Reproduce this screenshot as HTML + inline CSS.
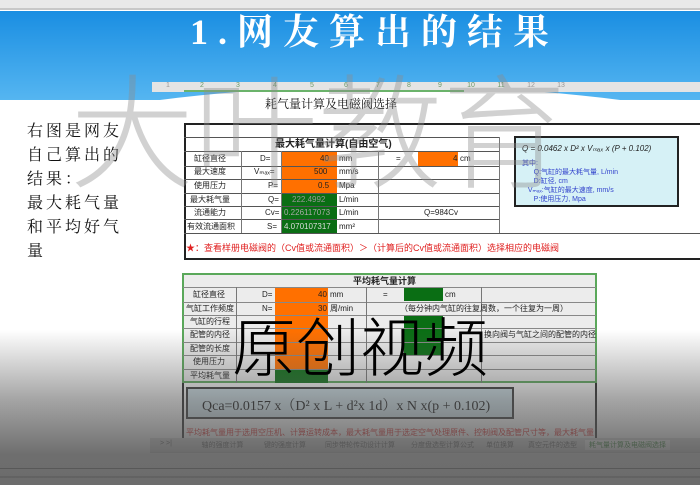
<!DOCTYPE html>
<html><head><meta charset="utf-8"><style>
*{margin:0;padding:0;box-sizing:border-box}
body{width:700px;height:485px;overflow:hidden;position:relative;background:#fff;font-family:"Liberation Sans","Noto Sans CJK SC",sans-serif}
.a{position:absolute}
.c{position:absolute;font-size:8px;color:#222;white-space:nowrap;line-height:1}
.or{background:#ff7000}
.gr{background:#0a6e14}
.hl{position:absolute;height:1px;background:#555}
.vl{position:absolute;width:1px;background:#777}
.serif{font-family:"Liberation Serif","Noto Serif CJK SC",serif}
</style></head><body>
<div class="a" style="left:0;top:0;width:700px;height:10px;background:#e9e9e9;border-bottom:2px solid #c8c8c8"></div>
<div class="a" style="left:0;top:11px;width:700px;height:90px;background:linear-gradient(#1a8ee2,#56b6f1)"></div>
<div class="a" style="left:-60px;top:86px;width:900px;height:200px;border-radius:50%;background:#fff"></div>
<div class="a" style="left:0;top:100px;width:700px;height:400px;background:#fff"></div>
<div class="a serif" style="left:190px;top:4px;font-size:36px;color:#fff;font-weight:bold;letter-spacing:10px;white-space:nowrap">1.网友算出的结果</div>
<div class="a" style="left:152px;top:82px;width:548px;height:10px;background:#e4e4e4"></div>
<div class="a" style="left:184px;top:90px;width:280px;height:2px;background:#6bb36b"></div>
<div class="a" style="left:152px;top:82px;width:548px;font-size:7px;color:#6a9a6a;display:flex">
<span style="width:32px;text-align:center;color:#999">1</span><span style="width:36px;text-align:center">2</span><span style="width:36px;text-align:center">3</span><span style="width:38px;text-align:center">4</span><span style="width:36px;text-align:center">5</span><span style="width:32px;text-align:center">6</span><span style="width:32px;text-align:center">7</span><span style="width:30px;text-align:center">8</span><span style="width:32px;text-align:center">9</span><span style="width:30px;text-align:center">10</span><span style="width:30px;text-align:center">11</span><span style="width:30px;text-align:center;color:#999">12</span><span style="width:30px;text-align:center;color:#999">13</span></div>
<div class="a serif" style="left:265px;top:95px;font-size:12px;color:#111">耗气量计算及电磁阀选择</div>
<div class="a serif" style="left:27px;top:120px;width:110px;font-size:16px;line-height:24px;color:#111;letter-spacing:3px">右图是网友自己算出的结果：<br>最大耗气量和平均好气量</div>
<div class="a" style="left:184px;top:123px;width:520px;height:137px;border:2px solid #222;border-right:none"></div>
<div class="a or" style="left:281px;top:152px;width:56px;height:41px"></div>
<div class="a gr" style="left:281px;top:193px;width:56px;height:40px"></div>
<div class="a or" style="left:418px;top:152px;width:40px;height:14px"></div>
<div class="hl" style="left:184px;top:137px;width:315px"></div>
<div class="hl" style="left:184px;top:151px;width:315px"></div>
<div class="hl" style="left:184px;top:166px;width:315px"></div>
<div class="hl" style="left:184px;top:179px;width:315px"></div>
<div class="hl" style="left:184px;top:193px;width:315px"></div>
<div class="hl" style="left:184px;top:206px;width:315px"></div>
<div class="hl" style="left:184px;top:219px;width:315px"></div>
<div class="hl" style="left:184px;top:233px;width:516px"></div>
<div class="vl" style="left:241px;top:151px;height:82px"></div>
<div class="vl" style="left:281px;top:151px;height:82px"></div>
<div class="vl" style="left:378px;top:151px;height:82px"></div>
<div class="vl" style="left:499px;top:137px;height:96px"></div>
<div class="c" style="left:275px;top:140px;font-size:10px;font-weight:bold">最大耗气量计算(自由空气)</div>
<div class="c" style="left:194px;top:155px">缸径直径</div><div class="c" style="left:260px;top:155px">D=</div><div class="c" style="left:320px;top:155px">40</div><div class="c" style="left:339px;top:155px">mm</div><div class="c" style="left:396px;top:155px">=</div><div class="c" style="left:453px;top:155px">4</div><div class="c" style="left:460px;top:155px">cm</div>
<div class="c" style="left:194px;top:168px">最大速度</div><div class="c" style="left:254px;top:168px">Vₘₐₓ=</div><div class="c" style="left:314px;top:168px">500</div><div class="c" style="left:339px;top:168px">mm/s</div>
<div class="c" style="left:194px;top:182px">使用压力</div><div class="c" style="left:268px;top:182px">P=</div><div class="c" style="left:318px;top:182px">0.5</div><div class="c" style="left:339px;top:182px">Mpa</div>
<div class="c" style="left:190px;top:196px">最大耗气量</div><div class="c" style="left:268px;top:196px">Q=</div><div class="c" style="left:292px;top:196px;color:#999">222.4992</div><div class="c" style="left:339px;top:196px">L/min</div>
<div class="c" style="left:194px;top:209px">流通能力</div><div class="c" style="left:265px;top:209px">Cv=</div><div class="c" style="left:284px;top:209px;color:#aaa">0.226117073</div><div class="c" style="left:339px;top:209px">L/min</div><div class="c" style="left:424px;top:209px">Q=984Cv</div>
<div class="c" style="left:187px;top:223px">有效流通面积</div><div class="c" style="left:267px;top:223px">S=</div><div class="c" style="left:284px;top:223px;color:#ddd">4.070107317</div><div class="c" style="left:339px;top:223px">mm²</div>
<div class="c" style="left:186px;top:244px;color:#e02020;font-size:9px">★：查看样册电磁阀的（Cv值或流通面积）＞（计算后的Cv值或流通面积）选择相应的电磁阀</div>
<div class="a" style="left:514px;top:136px;width:165px;height:71px;border:2px solid #222;background:#d6f1f6"></div>
<div class="c" style="left:522px;top:145px;font-style:italic;font-size:8px">Q = 0.0462 x D² x Vₘₐₓ x (P + 0.102)</div>
<div class="c" style="left:522px;top:159px;color:#3344cc;font-size:7px;line-height:9px">其中:<br>&nbsp;&nbsp;&nbsp;&nbsp;&nbsp;&nbsp;Q:气缸的最大耗气量, L/min<br>&nbsp;&nbsp;&nbsp;&nbsp;&nbsp;&nbsp;D:缸径, cm<br>&nbsp;&nbsp;&nbsp;Vₘₐₓ:气缸的最大速度, mm/s<br>&nbsp;&nbsp;&nbsp;&nbsp;&nbsp;&nbsp;P:使用压力, Mpa</div>
<div class="a" style="left:182px;top:273px;width:415px;height:110px;border:2px solid #5aa85a;background:#ececec"></div>
<div class="a or" style="left:275px;top:287px;width:53px;height:82px"></div>
<div class="a gr" style="left:275px;top:369px;width:53px;height:14px"></div>
<div class="a gr" style="left:404px;top:287px;width:39px;height:14px"></div>
<div class="a gr" style="left:404px;top:315px;width:39px;height:40px"></div>
<div class="hl" style="left:183px;top:287px;width:413px;background:#888"></div>
<div class="hl" style="left:183px;top:302px;width:413px;background:#888"></div>
<div class="hl" style="left:183px;top:315px;width:413px;background:#888"></div>
<div class="hl" style="left:183px;top:328px;width:413px;background:#888"></div>
<div class="hl" style="left:183px;top:342px;width:413px;background:#888"></div>
<div class="hl" style="left:183px;top:355px;width:413px;background:#888"></div>
<div class="hl" style="left:183px;top:369px;width:413px;background:#888"></div>
<div class="vl" style="left:236px;top:287px;height:96px"></div>
<div class="vl" style="left:366px;top:287px;height:96px"></div>
<div class="vl" style="left:481px;top:287px;height:96px"></div>
<div class="c" style="left:353px;top:277px;font-size:9px;font-weight:bold">平均耗气量计算</div>
<div class="c" style="left:193px;top:291px">缸径直径</div><div class="c" style="left:262px;top:291px">D=</div><div class="c" style="left:318px;top:291px">40</div><div class="c" style="left:330px;top:291px">mm</div><div class="c" style="left:383px;top:291px">=</div><div class="c" style="left:445px;top:291px">cm</div>
<div class="c" style="left:186px;top:305px">气缸工作频度</div><div class="c" style="left:262px;top:305px">N=</div><div class="c" style="left:318px;top:305px">30</div><div class="c" style="left:330px;top:305px">周/min</div><div class="c" style="left:400px;top:305px">（每分钟内气缸的往复周数，一个往复为一周）</div>
<div class="c" style="left:190px;top:318px">气缸的行程</div>
<div class="c" style="left:190px;top:331px">配管的内径</div><div class="c" style="left:484px;top:331px">换向阀与气缸之间的配管的内径</div>
<div class="c" style="left:190px;top:345px">配管的长度</div>
<div class="c" style="left:193px;top:358px">使用压力</div>
<div class="c" style="left:190px;top:372px">平均耗气量</div>
<div class="a" style="left:182px;top:383px;width:415px;height:60px;border-left:2px solid #222;border-right:2px solid #222"></div>
<div class="a" style="left:186px;top:387px;width:328px;height:32px;border:2px solid #333;background:#d3e6ee"></div>
<div class="a serif" style="left:202px;top:395px;font-size:14px;color:#111;white-space:nowrap">Qca=0.0157 x（D² x L + d²x 1d）x N x(p + 0.102)</div>
<div class="c" style="left:186px;top:429px;color:#e02020;font-size:8px">平均耗气量用于选用空压机、计算运转成本，最大耗气量用于选定空气处理原件、控制阀及配管尺寸等，最大耗气量</div>
<div class="a" style="left:150px;top:438px;width:550px;height:15px;background:#ddd;border-bottom:1px solid #ccc"></div>
<div class="a" style="left:150px;top:440px;width:550px;font-size:7px;color:#555;white-space:nowrap;display:flex">
<span style="width:40px;padding-left:10px">&gt; &gt;|</span><span style="width:65px;text-align:center">轴的强度计算</span><span style="width:60px;text-align:center">键的强度计算</span><span style="width:90px;text-align:center">同步带轮传动设计计算</span><span style="width:75px;text-align:center">分度盘选型计算公式</span><span style="width:40px;text-align:center">单位换算</span><span style="width:65px;text-align:center">真空元件的选型</span><span style="width:85px;text-align:center;background:#fff;color:#1d7a1d">耗气量计算及电磁阀选择</span></div>
<div class="a" style="left:0;top:468px;width:700px;height:1px;background:#444"></div>
<div class="a" style="left:0;top:476px;width:700px;height:2px;background:#999"></div>
<div class="a" style="left:70px;top:62px;font-size:124px;line-height:1;font-weight:300;color:rgba(140,140,140,0.4);white-space:nowrap;font-family:'Noto Sans CJK SC',sans-serif">大叶教育</div>
<div class="a" style="left:0;top:330px;width:700px;height:155px;background:linear-gradient(rgba(90,90,90,0),rgba(90,90,90,0.55) 45%,rgba(85,85,85,0.85) 80%,rgba(95,95,95,0.92))"></div>
<div class="a" style="left:232px;top:312px;font-size:64px;line-height:1;font-weight:300;color:#000;white-space:nowrap;font-family:'Noto Sans CJK SC',sans-serif">原创视频</div>
</body></html>
